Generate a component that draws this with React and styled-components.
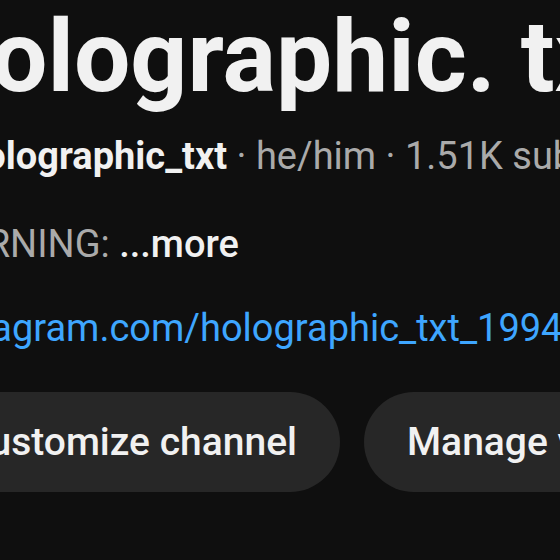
import React from 'react';
import styled, { createGlobalStyle } from 'styled-components';

const GlobalStyle = createGlobalStyle`
	html, body {
		margin: 0;
		padding: 0;
		background: #0f0f0f;
		overflow: hidden;
	}
	body {
		font-family: Roboto, "Noto Sans", Arial, sans-serif;
	}
`;

const Page = styled.div`
	width: 560px;
	height: 560px;
	overflow: hidden;
	background: #0f0f0f;
`;

const Header = styled.div`
	display: flex;
	flex-direction: column;
	margin-left: -71px;
	width: 900px;
`;

const Title = styled.h1`
	margin: -3px 0 0 6px;
	font-size: 100px;
	line-height: 120px;
	font-weight: 700;
	color: #f1f1f1;
	white-space: nowrap;
`;

const Meta = styled.div`
	margin-top: ${(p) => p.$gap}px;
	font-size: 38px;
	line-height: 54px;
	color: #aaaaaa;
	white-space: nowrap;
`;

const Handle = styled.span`
	color: #f1f1f1;
	font-weight: 700;
`;

const More = styled.span`
	color: #f1f1f1;
	font-weight: 500;
`;

const Link = styled.a`
	color: #3ea6ff;
	text-decoration: none;
`;

const Actions = styled.div`
	display: flex;
	gap: 24px;
	margin: 37px 0 0 -8px;
`;

const Pill = styled.button`
	height: 100px;
	padding: 0 43px;
	border: 0;
	border-radius: 50px;
	background: #272727;
	color: #f1f1f1;
	font-family: Roboto, "Noto Sans", Arial, sans-serif;
	font-size: 39px;
	font-weight: 500;
	white-space: nowrap;
	flex-shrink: 0;
`;

const App = () => (
	<Page>
		<GlobalStyle />
		<Header>
			<Title>holographic. txt</Title>
			<Meta $gap={12}>
				<Handle>@holographic_txt</Handle> · he/him · 1.51K subscribers · 12 videos
			</Meta>
			<Meta $gap={34}>
				WARNING: <More>...more</More>
			</Meta>
			<Meta $gap={30}>
				<Link href="#">instagram.com/holographic_txt_1994</Link> and 2 more links
			</Meta>
			<Actions>
				<Pill>Customize channel</Pill>
				<Pill>Manage videos</Pill>
			</Actions>
		</Header>
	</Page>
);

export default App;
